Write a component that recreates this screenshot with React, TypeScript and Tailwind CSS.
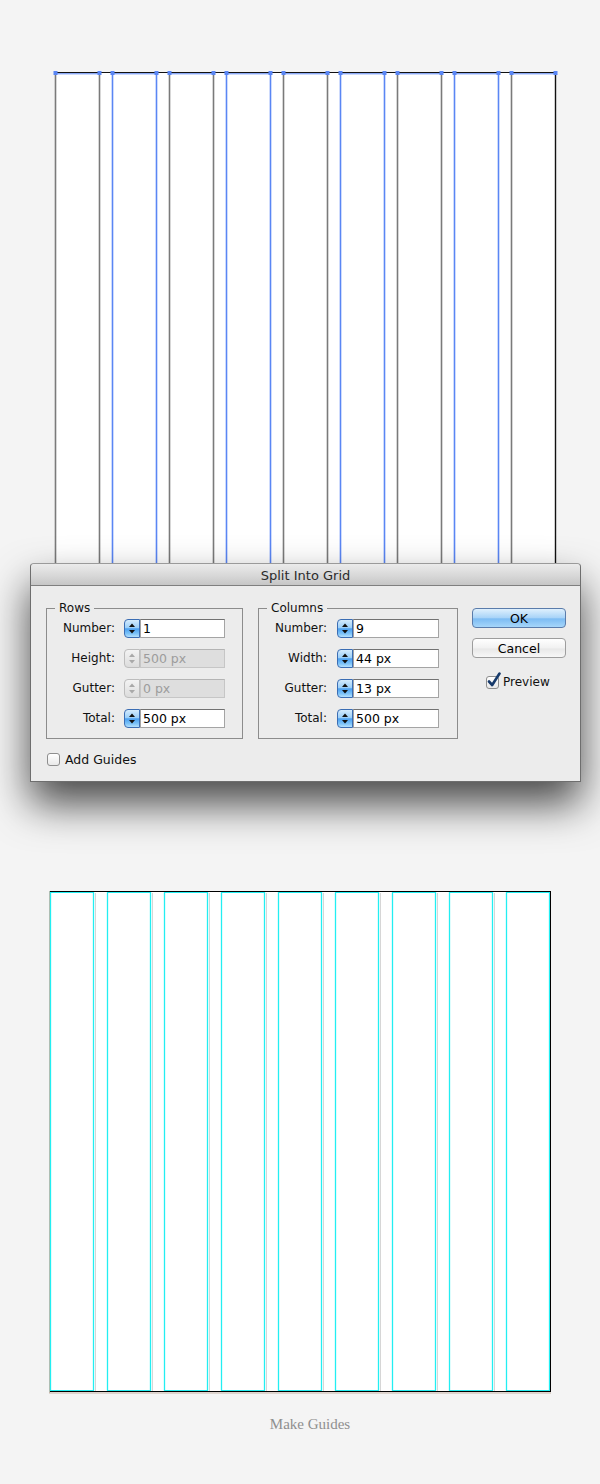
import React from "react";

const F = "font-['DejaVu_Sans',sans-serif]";

const TOP_L = 55;
const BOT_L = 50;
const COL_W = 44;
const STEP = 57;

function TopGrid() {
  const cols = Array.from({ length: 9 }, (_, i) => i);
  const bounds: number[] = [];
  cols.forEach((i) => {
    bounds.push(TOP_L + STEP * i, TOP_L + STEP * i + COL_W);
  });
  return (
    <svg width="600" height="563" viewBox="0 0 600 563" className="block">
      <rect x={55} y={72} width={500} height={491} fill="#ffffff" />
      {cols.map((i) => {
        const x0 = TOP_L + STEP * i;
        const x1 = x0 + COL_W;
        const c = i % 2 === 0 ? "#7a7a7a" : "#5a86f4";
        return (
          <g key={i}>
            <line x1={x0 + 0.5} y1={73} x2={x0 + 0.5} y2={563} stroke={c} strokeWidth={1.6} />
            {i !== 8 && <line x1={x1 + 0.5} y1={73} x2={x1 + 0.5} y2={563} stroke={c} strokeWidth={1.6} />}
            <line x1={x0} y1={73.8} x2={x1} y2={73.8} stroke="#5a86f4" strokeWidth={1} />
          </g>
        );
      })}
      <line x1={55} y1={72.5} x2={556} y2={72.5} stroke="#111111" strokeWidth={1.2} />
      <line x1={555.5} y1={72} x2={555.5} y2={563} stroke="#111111" strokeWidth={1.4} />
      {bounds.map((b, k) => (
        <rect key={k} x={b - 1.5} y={71} width={4} height={4} fill="#5a86f4" />
      ))}
    </svg>
  );
}

function BottomGrid() {
  const cols = Array.from({ length: 9 }, (_, i) => i);
  const cyan = "#22eef2";
  return (
    <svg width="600" height="508" viewBox="0 888 600 508" className="block">
      <rect x={50} y={891} width={500} height={501} fill="#ffffff" />
      <line x1={49.5} y1={891} x2={49.5} y2={1393} stroke="#c8b5a8" strokeWidth={1} />
      <line x1={49} y1={1393} x2={551} y2={1393} stroke="#c8b5a8" strokeWidth={1} />
      {cols.map((i) => {
        const x0 = BOT_L + STEP * i;
        const x1 = x0 + COL_W;
        return (
          <g key={i}>
            {i < 8 && (
              <line x1={x1 + 1.5} y1={893} x2={x1 + 1.5} y2={1391} stroke="#d6d6d6" strokeWidth={1} />
            )}
            <line x1={x0 + 0.5} y1={891} x2={x0 + 0.5} y2={1392} stroke={cyan} strokeWidth={1.3} />
            <line x1={x1 - 0.5} y1={891} x2={x1 - 0.5} y2={1392} stroke={cyan} strokeWidth={1.3} />
            <line x1={x0} y1={892.5} x2={x1} y2={892.5} stroke={cyan} strokeWidth={1.2} />
            <line x1={x0} y1={1390.5} x2={x1} y2={1390.5} stroke={cyan} strokeWidth={1.2} />
          </g>
        );
      })}
      <line x1={50} y1={891.5} x2={551} y2={891.5} stroke="#000000" strokeWidth={1} />
      <line x1={550.5} y1={891} x2={550.5} y2={1392} stroke="#000000" strokeWidth={1} />
      <line x1={50} y1={1391.5} x2={551} y2={1391.5} stroke="#000000" strokeWidth={1} />
    </svg>
  );
}

function Stepper({ disabled }: { disabled?: boolean }) {
  const fill = disabled ? "#a9a9a9" : "#111111";
  return (
    <div
      className={
        disabled
          ? "w-[16px] h-[19px] shrink-0 rounded-l-[4px] border border-[#bdbdbd] bg-[linear-gradient(to_bottom,#f3f3f3,#dcdcdc)] flex items-center justify-center"
          : "w-[16px] h-[19px] shrink-0 rounded-l-[4px] border border-[#3b6db3] bg-[linear-gradient(to_bottom,#d4ebfd_0%,#9ccff8_45%,#4a9ff0_52%,#7cc3f8_80%,#b4e0fd_100%)] flex items-center justify-center"
      }
    >
      <svg width="8" height="13" viewBox="0 0 8 13">
        <path d="M4 1.5 L7 5 H1 Z" fill={fill} />
        <path d="M4 11.5 L7 8 H1 Z" fill={fill} />
      </svg>
    </div>
  );
}

function Field({
  label,
  value,
  disabled,
  inputW,
  gap,
}: {
  label: string;
  value: string;
  disabled?: boolean;
  inputW: string;
  gap: string;
}) {
  return (
    <div className={"flex items-center h-[20px] " + gap}>
      <div className="w-[68px] text-right text-[12px] leading-[15px] text-[#111]">{label}</div>
      <div className="flex items-center">
        <Stepper disabled={disabled} />
        <div
          className={
            (disabled
              ? "bg-[#dedede] text-[#9c9c9c] border-[#c6c6c6] border-t-[#b4b4b4] "
              : "bg-white text-[#000] border-[#a4a4a4] border-t-[#727272] ") +
            inputW +
            " h-[19px] border pl-[2px] text-[12.5px] leading-[17px] whitespace-nowrap"
          }
        >
          {value}
        </div>
      </div>
    </div>
  );
}

function Group({
  title,
  width,
  legendLeft,
  children,
}: {
  title: string;
  width: string;
  legendLeft: string;
  children: React.ReactNode;
}) {
  return (
    <div className={"relative h-[131px] border border-[#8c8c8c] pt-[9px] flex flex-col gap-[10px] " + width}>
      <div
        className={
          "absolute top-[-8px] px-[4px] bg-[#ececec] text-[12px] leading-[15px] text-[#111] " + legendLeft
        }
      >
        {title}
      </div>
      {children}
    </div>
  );
}

function Check({ checked }: { checked?: boolean }) {
  return (
    <div className="relative w-[13px] h-[13px] shrink-0 rounded-[3px] border border-[#8e8e8e] bg-[linear-gradient(to_bottom,#ffffff,#e9e9e9)]">
      {checked && (
        <svg width="14" height="16" viewBox="0 0 14 16" className="absolute left-[0px] top-[-5px]">
          <path
            d="M2 9.5 L5.2 13 L12.5 1.5"
            fill="none"
            stroke="#173a6b"
            strokeWidth={2.6}
            strokeLinecap="round"
            strokeLinejoin="round"
          />
        </svg>
      )}
    </div>
  );
}

function Dialog() {
  return (
    <div
      className={
        "relative z-10 ml-[30px] w-[551px] h-[219px] bg-[#ececec] border border-[#6e6e6e] border-t-[#9a9a9a] rounded-t-[4px] shadow-[0_22px_42px_rgba(0,0,0,0.7)] " +
        F
      }
    >
      <div className="h-[22px] border-b border-[#7f7f7f] rounded-t-[4px] bg-[linear-gradient(to_bottom,#ebebeb,#d6d6d6_60%,#c6c6c6)] flex items-center justify-center text-[13px] leading-[16px] text-[#2b2b2b] pt-[2px]">
        Split Into Grid
      </div>
      <div className="pt-[22px] pl-[15px]">
        <div className="flex items-start">
          <Group title="Rows" width="w-[197px]" legendLeft="left-[8px]">
            <Field label="Number:" value="1" inputW="w-[85px]" gap="gap-[9px]" />
            <Field label="Height:" value="500 px" disabled inputW="w-[85px]" gap="gap-[9px]" />
            <Field label="Gutter:" value="0 px" disabled inputW="w-[85px]" gap="gap-[9px]" />
            <Field label="Total:" value="500 px" inputW="w-[85px]" gap="gap-[9px]" />
          </Group>
          <div className="ml-[15px]">
            <Group title="Columns" width="w-[200px]" legendLeft="left-[8px]">
              <Field label="Number:" value="9" inputW="w-[86px]" gap="gap-[10px]" />
              <Field label="Width:" value="44 px" inputW="w-[86px]" gap="gap-[10px]" />
              <Field label="Gutter:" value="13 px" inputW="w-[86px]" gap="gap-[10px]" />
              <Field label="Total:" value="500 px" inputW="w-[86px]" gap="gap-[10px]" />
            </Group>
          </div>
          <div className="ml-[14px] w-[94px] flex flex-col">
            <div className="h-[20px] rounded-[4px] border border-[#5a7cab] bg-[linear-gradient(to_bottom,#dff0fd_0%,#a9d4f8_48%,#7dbcf3_55%,#a6d6fa_100%)] flex items-center justify-center text-[12.5px] leading-[15px] text-[#000]">
              OK
            </div>
            <div className="mt-[10px] h-[20px] rounded-[4px] border border-[#9d9d9d] bg-[linear-gradient(to_bottom,#ffffff,#f1f1f1_50%,#e8e8e8_55%,#f7f7f7)] flex items-center justify-center text-[12.5px] leading-[15px] text-[#000]">
              Cancel
            </div>
            <div className="mt-[17px] ml-[14px] flex items-center gap-[4px]">
              <Check checked />
              <span className="text-[12px] leading-[15px] text-[#111]">Preview</span>
            </div>
          </div>
        </div>
        <div className="mt-[13px] ml-[1px] flex items-center gap-[5px]">
          <Check />
          <span className="text-[12.5px] leading-[15px] text-[#111]">Add Guides</span>
        </div>
      </div>
    </div>
  );
}

export default function App() {
  return (
    <div className="w-[600px] h-[1484px] bg-[#f4f4f4] overflow-hidden">
      <TopGrid />
      <Dialog />
      <div className="mt-[106px]">
        <BottomGrid />
      </div>
      <div className="mt-[18px] pl-[20px] text-center text-[15px] leading-[20px] text-[#8f8f8f] font-['Liberation_Serif',serif]">
        Make Guides
      </div>
    </div>
  );
}
